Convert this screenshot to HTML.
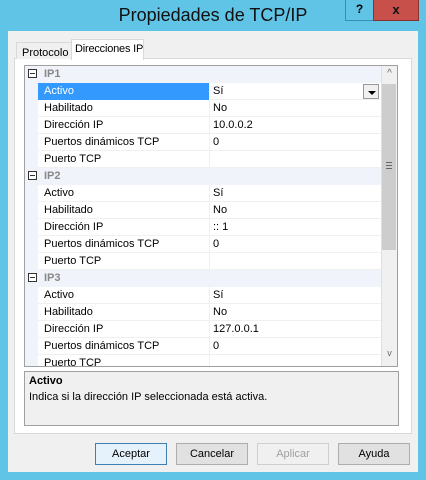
<html><head><style>
*{margin:0;padding:0;box-sizing:border-box}
body{width:426px;height:480px;background:#5fc4e6;font-family:"Liberation Sans",sans-serif;font-size:11px;color:#000;position:relative;overflow:hidden}
.a{position:absolute;white-space:nowrap}
.title{left:0;top:5px;width:426px;text-align:center;font-size:18px;color:#111}
.row{position:absolute;left:38px;width:343px;height:17px;border-bottom:1px solid #f0f0f0;background:#fff}
.row span{position:absolute;top:2px;white-space:nowrap}
.row .k{left:6px}.row .v{left:175px}
.row .sep{position:absolute;left:171px;top:0;width:1px;height:17px;background:#f0f0f0}
.hdr{position:absolute;left:24px;width:357px;height:17px;background:#f0f3fa}
.hdr span{position:absolute;left:20px;top:2px;color:#888;font-weight:bold}
.hdr i{position:absolute;left:4px;top:3px;width:9px;height:9px;border:1px solid #333;background:#fff}
.hdr i:after{content:"";position:absolute;left:1px;top:3px;width:5px;height:1px;background:#333}
.btn{position:absolute;top:443px;width:72px;height:22px;border:1px solid #adadad;background:#e1e1e1;text-align:center;line-height:20px;font-size:11px}
</style></head><body>
<div class="a title">Propiedades de TCP/IP</div>
<div class="a" style="left:345px;top:0;width:29px;height:21px;background:#5fc4e6;border:1px solid #3a8fb0;border-top:none;text-align:center;font-weight:bold;font-size:12px;line-height:19px">?</div>
<div class="a" style="left:373px;top:0;width:46px;height:21px;background:#c7504a;border:1px solid #8a3030;border-top:none;text-align:center;font-weight:bold;font-size:13px;line-height:19px;color:#111">x</div>
<div class="a" style="left:8px;top:31px;width:410px;height:441px;background:#f0f0f0"></div>
<div class="a" style="left:14px;top:58px;width:398px;height:376px;background:#fff;border:1px solid #d9d9d9"></div>
<div class="a" style="left:16px;top:42px;width:56px;height:17px;background:#f0f0f0;border:1px solid #d9d9d9;border-bottom:none;padding:4px 0 0 5px">Protocolo</div>
<div class="a" style="left:71px;top:39px;width:73px;height:21px;background:#fff;border:1px solid #d9d9d9;border-bottom:none;padding:3px 0 0 3px;letter-spacing:-0.2px">Direcciones IP</div>
<div class="a" style="left:24px;top:65px;width:374px;height:302px;border:1px solid #a0a0a0;background:#f0f3fa;overflow:hidden">
</div>
<div class="a" style="left:25px;top:66px;width:372px;height:300px;overflow:hidden">
 <div style="position:absolute;left:-25px;top:-66px">
  <div class="hdr" style="top:66px"><i></i><span>IP1</span></div>
  <div class="row" style="top:83px;background:#fff"><div style="position:absolute;left:0;top:0;width:171px;height:17px;background:#3399ff"></div><span class="k" style="color:#fff">Activo</span><span class="v">Sí</span>
   <div style="position:absolute;left:325px;top:1px;width:16px;height:15px;border:1px solid #999;background:#f0f0f0"><div style="position:absolute;left:4px;top:6px;border-left:4px solid transparent;border-right:4px solid transparent;border-top:4px solid #000"></div></div></div>
  <div class="row" style="top:100px"><span class="k">Habilitado</span><span class="v">No</span><div class="sep"></div></div>
  <div class="row" style="top:117px"><span class="k">Dirección IP</span><span class="v">10.0.0.2</span><div class="sep"></div></div>
  <div class="row" style="top:134px"><span class="k">Puertos dinámicos TCP</span><span class="v">0</span><div class="sep"></div></div>
  <div class="row" style="top:151px"><span class="k">Puerto TCP</span><div class="sep"></div></div>
  <div class="hdr" style="top:168px"><i></i><span>IP2</span></div>
  <div class="row" style="top:185px"><span class="k">Activo</span><span class="v">Sí</span><div class="sep"></div></div>
  <div class="row" style="top:202px"><span class="k">Habilitado</span><span class="v">No</span><div class="sep"></div></div>
  <div class="row" style="top:219px"><span class="k">Dirección IP</span><span class="v">:: 1</span><div class="sep"></div></div>
  <div class="row" style="top:236px"><span class="k">Puertos dinámicos TCP</span><span class="v">0</span><div class="sep"></div></div>
  <div class="row" style="top:253px"><span class="k">Puerto TCP</span><div class="sep"></div></div>
  <div class="hdr" style="top:270px"><i></i><span>IP3</span></div>
  <div class="row" style="top:287px"><span class="k">Activo</span><span class="v">Sí</span><div class="sep"></div></div>
  <div class="row" style="top:304px"><span class="k">Habilitado</span><span class="v">No</span><div class="sep"></div></div>
  <div class="row" style="top:321px"><span class="k">Dirección IP</span><span class="v">127.0.0.1</span><div class="sep"></div></div>
  <div class="row" style="top:338px"><span class="k">Puertos dinámicos TCP</span><span class="v">0</span><div class="sep"></div></div>
  <div class="row" style="top:355px"><span class="k">Puerto TCP</span><div class="sep"></div></div>
  <div class="a" style="left:381px;top:66px;width:16px;height:300px;background:#f0f0f0;border-left:1px solid #e0e0e0"></div>
  <div class="a" style="left:382px;top:68px;width:15px;height:15px;text-align:center;font-size:10px;color:#666">^</div>
  <div class="a" style="left:382px;top:84px;width:14px;height:166px;background:#cdcdcd"></div>
  <div class="a" style="left:386px;top:162px;width:6px;height:7px;border-top:1px solid #666;border-bottom:1px solid #666"><div style="margin-top:2px;height:1px;background:#666"></div></div>
  <div class="a" style="left:382px;top:348px;width:15px;height:15px;text-align:center;font-size:9px;color:#666">v</div>
 </div>
</div>
<div class="a" style="left:24px;top:371px;width:375px;height:55px;background:#f0f0f0;border:1px solid #a0a0a0;padding:3px 0 0 4px">
 <div style="font-weight:bold">Activo</div>
 <div style="margin-top:4px">Indica si la dirección IP seleccionada está activa.</div>
</div>
<div class="btn" style="left:95px;border-color:#3c7fb1;background:#e5f1fb">Aceptar</div>
<div class="btn" style="left:176px">Cancelar</div>
<div class="btn" style="left:257px;color:#a0a0a0;background:#f0f0f0;border-color:#cfcfcf">Aplicar</div>
<div class="btn" style="left:338px">Ayuda</div>
</body></html>
